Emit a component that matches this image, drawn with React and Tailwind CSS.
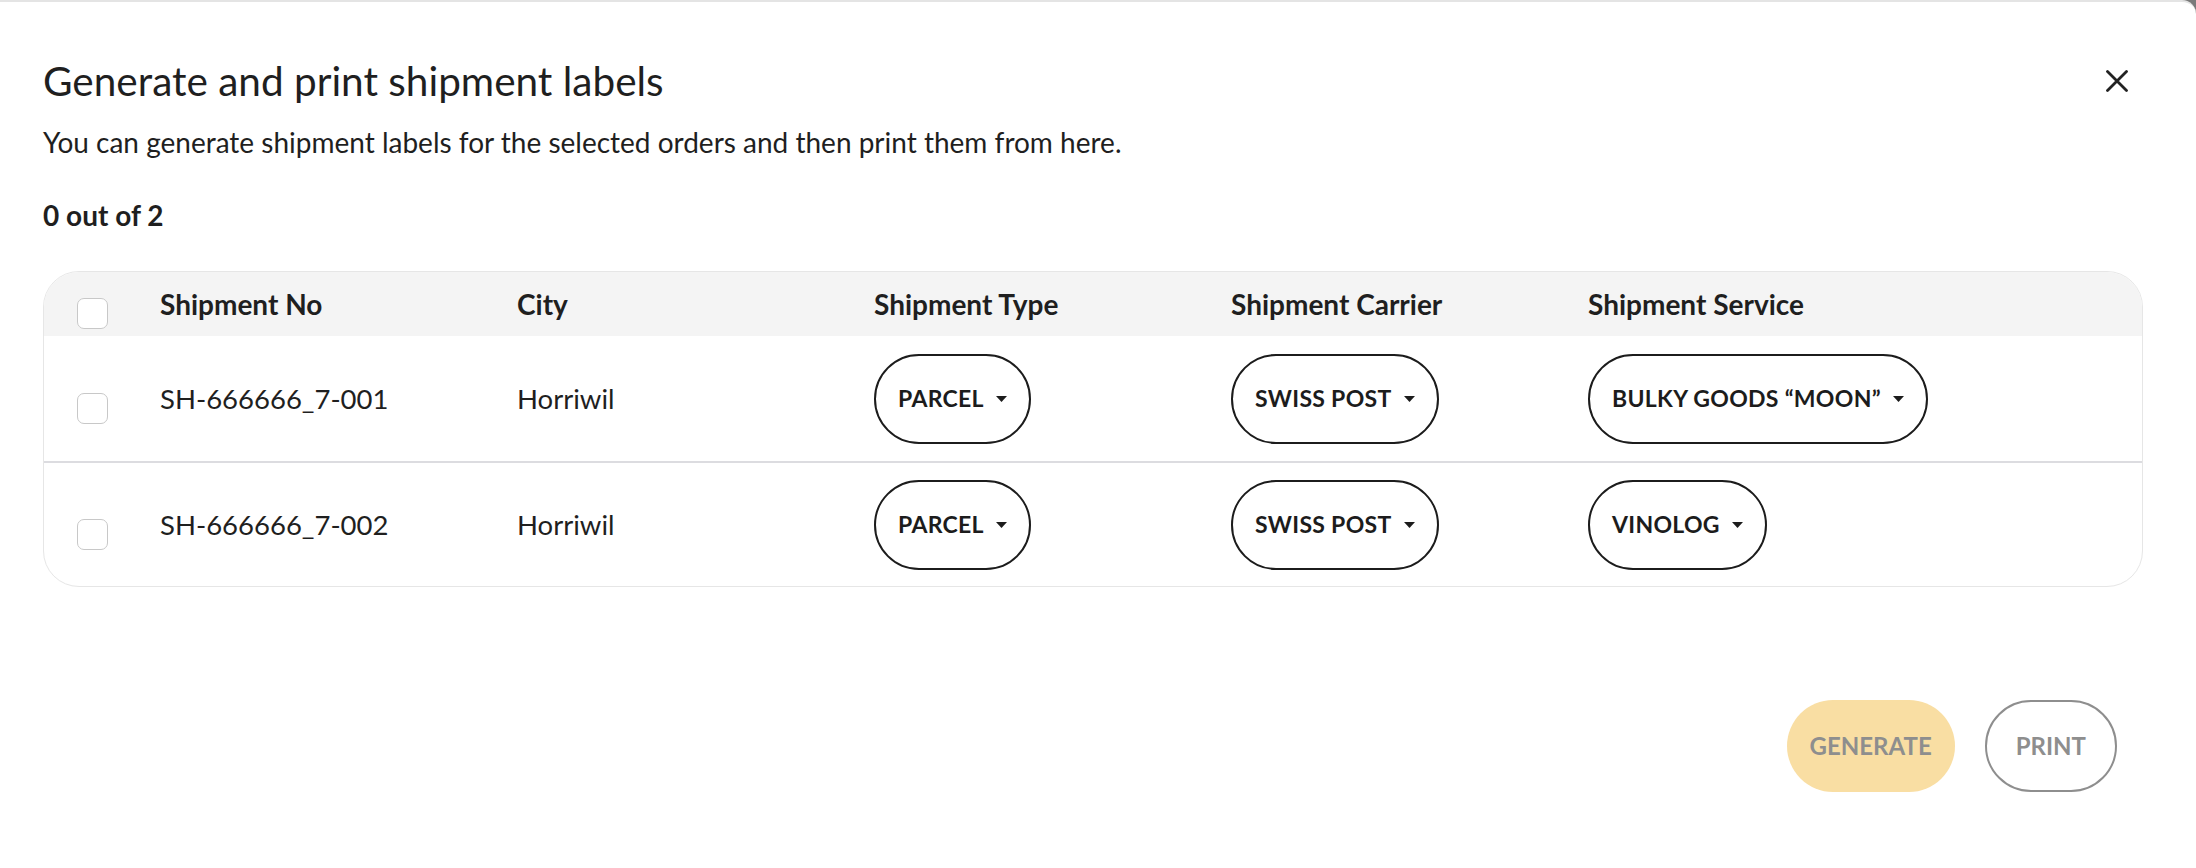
import React from "react";

function Caret() {
  return (
    <svg width="11" height="6" viewBox="0 0 11 6" className="shrink-0">
      <path d="M0 0 H11 L5.5 6 Z" fill="#1c1c1c" />
    </svg>
  );
}

function Pill({ label }) {
  return (
    <div className="inline-flex h-[90px] items-center gap-[12px] rounded-full border-2 border-[#1c1c1c] px-[22px] text-[23px] font-bold uppercase tracking-[0.3px] text-[#1c1c1c]">
      <span>{label}</span>
      <Caret />
    </div>
  );
}

function Checkbox() {
  return (
    <div className="mt-[19px] h-[31px] w-[31px] rounded-[7px] border-[1.5px] border-[#c8c8c8] bg-white" />
  );
}

const rows = [
  { no: "SH-666666_7-001", city: "Horriwil", type: "PARCEL", carrier: "SWISS POST", service: "BULKY GOODS “MOON”" },
  { no: "SH-666666_7-002", city: "Horriwil", type: "PARCEL", carrier: "SWISS POST", service: "VINOLOG" },
];

export default function App() {
  return (
    <div className="h-[868px] w-[2196px] overflow-hidden bg-[#7a7a7a] font-['Lato','Liberation_Sans',sans-serif] text-[#1f1f1f]">
      <div className="h-full rounded-tr-[14px] border-t-2 border-[#e4e4e4] bg-white pl-[43px] pr-[53px] pt-[55px]">
        <div className="flex items-center justify-between">
          <h1 className="text-[40.5px] leading-[48px] font-normal text-[#1f1f1f]">Generate and print shipment labels</h1>
          <button className="mr-[15px] flex h-[22px] w-[22px] items-center justify-center">
            <svg width="22" height="22" viewBox="0 0 22 22">
              <path d="M1.5 1.5 L20.5 20.5 M20.5 1.5 L1.5 20.5" stroke="#222" strokeWidth="2.8" strokeLinecap="round" />
            </svg>
          </button>
        </div>
        <p className="mt-[21px] text-[28px] leading-[32px] text-[#1f1f1f]">
          You can generate shipment labels for the selected orders and then print them from here.
        </p>
        <p className="mt-[41px] text-[28px] leading-[32px] font-bold text-[#1f1f1f]">0 out of 2</p>

        <div className="mt-[40px] overflow-hidden rounded-[36px] border border-[#e6e6e6]">
          <div className="grid h-[64px] grid-cols-[116px_357px_357px_357px_357px_1fr] items-center bg-[#f4f4f4] text-[28px] font-bold">
            <div className="flex items-center pl-[33px]">
              <Checkbox />
            </div>
            <div>Shipment No</div>
            <div>City</div>
            <div>Shipment Type</div>
            <div>Shipment Carrier</div>
            <div>Shipment Service</div>
          </div>
          {rows.map((r, i) => (
            <div
              key={r.no}
              className={
                i === 0
                  ? "grid h-[125px] grid-cols-[116px_357px_357px_357px_357px_1fr] items-center text-[27.5px]"
                  : "grid h-[125px] grid-cols-[116px_357px_357px_357px_357px_1fr] items-center border-t-2 border-[#dcdce0] text-[27.5px]"
              }
            >
              <div className="flex items-center pl-[33px]">
                <Checkbox />
              </div>
              <div>{r.no}</div>
              <div>{r.city}</div>
              <div>
                <Pill label={r.type} />
              </div>
              <div>
                <Pill label={r.carrier} />
              </div>
              <div>
                <Pill label={r.service} />
              </div>
            </div>
          ))}
        </div>

        <div className="mt-[113px] flex justify-end gap-[30px] pr-[26px]">
          <button className="flex h-[92px] items-center rounded-full bg-[#f9dea3] px-[23px] text-[24px] font-bold text-[#8e8e8e]">
            GENERATE
          </button>
          <button className="flex h-[92px] items-center rounded-full border-2 border-[#8e8e8e] bg-white px-[29px] text-[24px] font-bold text-[#8e8e8e]">
            PRINT
          </button>
        </div>
      </div>
    </div>
  );
}
